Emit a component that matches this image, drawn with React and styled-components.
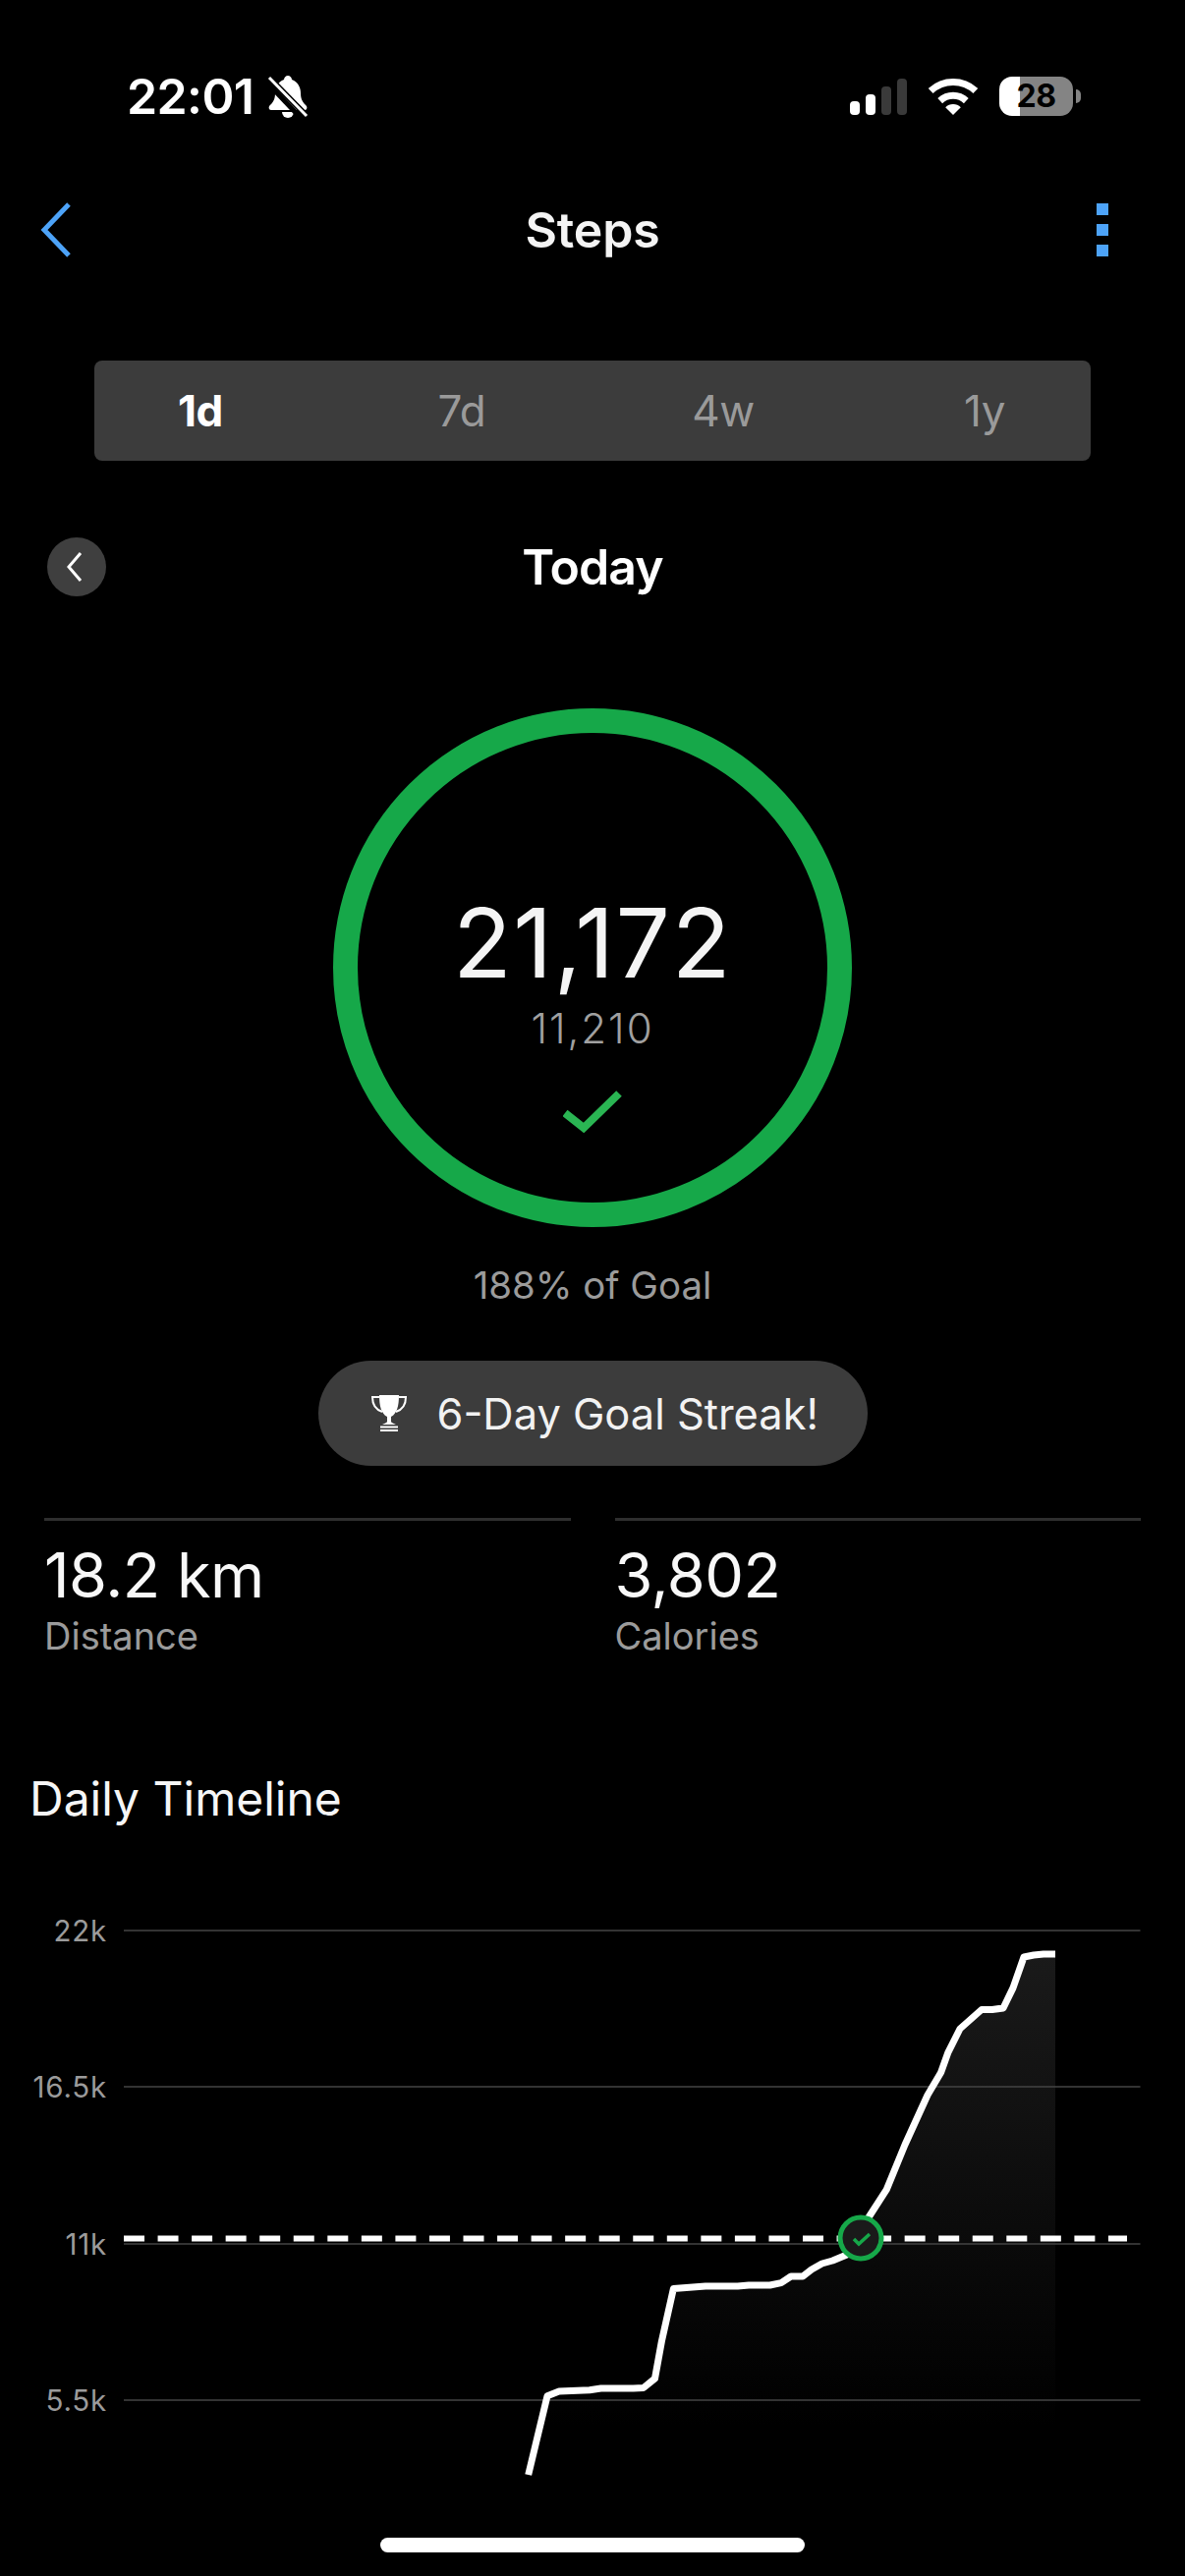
import React from "react";
import styled, { createGlobalStyle } from "styled-components";

const Global = createGlobalStyle`
  html, body { margin: 0; padding: 0; background: #000; }
  * { box-sizing: border-box; }
`;

const Page = styled.div`
  width: 1206px;
  height: 2622px;
  background: #000;
  overflow: hidden;
  display: flex;
  flex-direction: column;
  font-family: Inter, "Liberation Sans", sans-serif;
  color: #fff;
`;

const StatusBar = styled.div`
  margin-top: 64px;
  height: 68px;
  padding: 0 106px 0 129px;
  display: flex;
  align-items: center;
  justify-content: space-between;
`;
const StatusLeft = styled.div`
  display: flex;
  align-items: center;
  gap: 14px;
`;
const Clock = styled.span`
  font-size: 50px;
  line-height: 68px;
  font-weight: 600;
  letter-spacing: -0.6px;
`;
const StatusRight = styled.div`
  display: flex;
  align-items: center;
  gap: 22px;
`;
const Signal = styled.div`
  display: flex;
  align-items: flex-end;
  gap: 6px;
  height: 37px;
`;
const SignalBar = styled.i`
  display: block;
  width: 10px;
  height: ${(p) => p.$h}px;
  border-radius: 4px;
  background: ${(p) => (p.$on ? "#fff" : "#3a3a3a")};
`;
const Battery = styled.div`
  display: flex;
  align-items: center;
  gap: 3px;
`;
const BatteryBody = styled.div`
  width: 75px;
  height: 40px;
  border-radius: 13px;
  background: linear-gradient(to right, #fff 0 21px, #848484 21px);
  color: #000;
  font-size: 32px;
  font-weight: 700;
  line-height: 40px;
  text-align: center;
  letter-spacing: -0.5px;
`;
const BatteryCap = styled.i`
  display: block;
  width: 5px;
  height: 14px;
  border-radius: 0 5px 5px 0;
  background: #848484;
`;

const NavBar = styled.header`
  margin-top: 72px;
  height: 60px;
  padding: 0 40px;
  display: grid;
  grid-template-columns: 1fr auto 1fr;
  align-items: center;
`;
const NavTitle = styled.h1`
  margin: 0;
  font-size: 50px;
  line-height: 60px;
  font-weight: 600;
  letter-spacing: -0.2px;
  color: #f4f4f4;
`;
const Dots = styled.div`
  justify-self: end;
  margin-right: 38px;
  display: flex;
  flex-direction: column;
  gap: 9px;
`;
const Dot = styled.i`
  display: block;
  width: 12px;
  height: 12px;
  background: #4da3f8;
`;

const Segment = styled.div`
  margin: 103px 96px 0;
  height: 102px;
  padding: 0 8px;
  border-radius: 8px;
  background: #3c3c3c;
  display: grid;
  grid-template-columns: repeat(4, 200px);
  column-gap: 66px;
  align-items: center;
`;
const SegmentItem = styled.div`
  text-align: center;
  font-size: 44px;
  line-height: 56px;
  letter-spacing: -0.4px;
  font-weight: ${(p) => (p.$active ? 700 : 400)};
  color: ${(p) => (p.$active ? "#fff" : "#9a9a9a")};
`;

const DateRow = styled.div`
  margin-top: 78px;
  height: 60px;
  padding: 0 48px;
  display: grid;
  grid-template-columns: 1fr auto 1fr;
  align-items: center;
`;
const RoundButton = styled.div`
  width: 60px;
  height: 60px;
  border-radius: 50%;
  background: #3f3f3f;
  display: flex;
  align-items: center;
  justify-content: center;
`;
const BackGlyph = styled.svg`
  display: block;
  margin-left: -4px;
`;
const DateTitle = styled.h2`
  margin: 0;
  font-size: 50px;
  line-height: 60px;
  font-weight: 600;
  letter-spacing: -0.9px;
`;

const Ring = styled.div`
  margin: 114px auto 0;
  width: 528px;
  height: 528px;
  border-radius: 50%;
  border: 25px solid #16a849;
  display: flex;
  flex-direction: column;
  align-items: center;
  padding-top: 155px;
`;
const RingValue = styled.div`
  font-size: 98px;
  line-height: 118px;
  font-weight: 400;
  color: #f4f4f4;
  letter-spacing: 1.6px;
`;
const RingGoal = styled.div`
  font-size: 42px;
  line-height: 50px;
  font-weight: 300;
  color: #a0a0a0;
  letter-spacing: 2px;
  margin-top: 3px;
`;
const RingCheck = styled.svg`
  margin-top: 37px;
  display: block;
`;

const GoalText = styled.div`
  margin-top: 34px;
  text-align: center;
  font-size: 38.4px;
  line-height: 50px;
  color: #9b9b9b;
`;

const Pill = styled.div`
  margin: 52px auto 0;
  width: 559px;
  height: 107px;
  border-radius: 54px;
  background: #3c3c3c;
  display: flex;
  align-items: center;
  padding-left: 54px;
  gap: 31px;
`;
const PillText = styled.span`
  font-size: 43.4px;
  line-height: 56px;
  color: #f2f2f2;
`;

const Stats = styled.section`
  margin-top: 53px;
  padding: 0 45px;
  display: grid;
  grid-template-columns: 1fr 1fr;
  column-gap: 45px;
`;
const Stat = styled.div`
  border-top: 3px solid #2e2e2e;
  padding-top: 20px;
`;
const StatValue = styled.div`
  font-size: 63px;
  line-height: 70px;
  color: #f8f8f8;
  letter-spacing: -0.5px;
`;
const StatLabel = styled.div`
  margin-top: 5px;
  font-size: 38px;
  line-height: 44px;
  color: #9b9b9b;
`;

const SectionTitle = styled.h3`
  margin: 114px 0 0;
  padding-left: 30px;
  font-size: 48px;
  line-height: 60px;
  font-weight: 400;
  color: #f6f6f6;
`;

const Chart = styled.svg`
  display: block;
  flex: none;
`;
const AxisLabel = styled.text`
  font-family: Inter, "Liberation Sans", sans-serif;
  font-size: 29.5px;
  letter-spacing: 0.8px;
  fill: #9b9b9b;
`;

const HomeBar = styled.div`
  margin: 42px auto 0;
  width: 432px;
  height: 15px;
  border-radius: 8px;
  background: #fff;
`;

const Bell = () => (
  <svg width="42" height="44" viewBox="0 0 42 44">
    <path
      fill="#fff"
      d="M21 1C23 1 25 3 25 5C31 7 34 13 34 19C34 25 36 28 40 32C41 34 40 36 38 36L4 36C2 36 1 34 2 32C6 28 8 25 8 19C8 13 11 7 17 5C17 3 19 1 21 1Z"
    />
    <path fill="#fff" d="M15 38H27A6 6 0 0 1 15 38Z" />
    <line x1="-1" y1="7" x2="34" y2="44" stroke="#000" strokeWidth="5" />
    <line x1="2" y1="3" x2="40" y2="42" stroke="#000" strokeWidth="6" />
    <line x1="2" y1="3" x2="40" y2="42" stroke="#fff" strokeWidth="3" />
  </svg>
);

const Wifi = () => (
  <svg width="50" height="37" viewBox="0 0 50 37">
    <path d="M2.2 12.5A33.5 33.5 0 0 1 47.8 12.5" fill="none" stroke="#fff" strokeWidth="7" />
    <path d="M11.7 22.6A19.5 19.5 0 0 1 38.3 22.6" fill="none" stroke="#fff" strokeWidth="7" />
    <path d="M25 37L17.2 29.2A11 11 0 0 1 32.8 29.2Z" fill="#fff" />
  </svg>
);

const Trophy = () => (
  <svg width="36" height="37" viewBox="0 0 36 37">
    <path fill="#fff" d="M8 0H28C28 11 26 19 20 22V27C20 28 23 29 25 30H11C13 29 16 28 16 27V22C10 19 8 11 8 0Z" />
    <path d="M8 2H1C1 10 5 15 11 17M28 2H35C35 10 31 15 25 17" fill="none" stroke="#fff" strokeWidth="2" />
    <rect x="9" y="31.5" width="18" height="2" fill="#fff" />
    <rect x="9" y="35" width="18" height="2" fill="#fff" />
  </svg>
);

const linePoints = [
  [537.7, 2519], [557, 2438.7], [569, 2434], [600, 2432.7], [611.6, 2431], [644.5, 2431],
  [655, 2430.4], [666.5, 2421], [673.4, 2383], [685.4, 2329.6], [718, 2327], [750.8, 2327],
  [762, 2326], [783.6, 2326], [795, 2323.6], [805, 2317], [817, 2317], [826, 2310],
  [836.6, 2304], [847.4, 2301], [863, 2294.6], [884, 2257], [902.3, 2228.7], [921, 2183],
  [944, 2132.5], [957.6, 2109.5], [965, 2088.8], [977, 2065], [999, 2045.5], [1009.7, 2045.5],
  [1021, 2044], [1031, 2023.4], [1042, 1992], [1052, 1990], [1062, 1989], [1074, 1989],
];
const linePath = linePoints.map((p) => p.join(",")).join(" ");
const fillPath = `${linePath} 1074,2519 537.7,2519`;

const gridLines = [
  { y: 1965, label: "22k" },
  { y: 2124, label: "16.5k" },
  { y: 2284, label: "11k" },
  { y: 2443, label: "5.5k" },
];

const TimelineChart = () => (
  <Chart width="1206" height="680" viewBox="0 1861 1206 680">
    <defs>
      <linearGradient id="area" x1="0" y1="1989" x2="0" y2="2470" gradientUnits="userSpaceOnUse">
        <stop offset="0" stopColor="#1a1a1a" />
        <stop offset="1" stopColor="#000" />
      </linearGradient>
    </defs>
    <polygon points={fillPath} fill="url(#area)" />
    {gridLines.map((g) => (
      <g key={g.label}>
        <line x1="126" x2="1160.5" y1={g.y} y2={g.y} stroke="#444" strokeWidth="1.5" />
        <AxisLabel x="109" y={g.y + 11} textAnchor="end">{g.label}</AxisLabel>
      </g>
    ))}
    <line x1="126" x2="1147" y1="2278.5" y2="2278.5" stroke="#fff" strokeWidth="6" strokeDasharray="21 13.55" />
    <polyline points={linePath} fill="none" stroke="#fff" strokeWidth="7" strokeLinejoin="round" />
    <circle cx="876" cy="2278" r="21" fill="#1a1a1a" stroke="#16a849" strokeWidth="5" />
    <polyline points="869,2279 874,2284 885,2274" fill="none" stroke="#16a849" strokeWidth="3.5" />
  </Chart>
);

export default function App() {
  return (
    <Page>
      <Global />
      <StatusBar>
        <StatusLeft>
          <Clock>22:01</Clock>
          <Bell />
        </StatusLeft>
        <StatusRight>
          <Signal>
            <SignalBar $on $h={14} />
            <SignalBar $on $h={21} />
            <SignalBar $h={29} />
            <SignalBar $h={37} />
          </Signal>
          <Wifi />
          <Battery>
            <BatteryBody>28</BatteryBody>
            <BatteryCap />
          </Battery>
        </StatusRight>
      </StatusBar>

      <NavBar>
        <svg width="34" height="56" viewBox="0 0 34 56">
          <polyline points="30,2 5,28 30,54" fill="none" stroke="#4da3f8" strokeWidth="5" />
        </svg>
        <NavTitle>Steps</NavTitle>
        <Dots>
          <Dot />
          <Dot />
          <Dot />
        </Dots>
      </NavBar>

      <Segment>
        <SegmentItem $active>1d</SegmentItem>
        <SegmentItem>7d</SegmentItem>
        <SegmentItem>4w</SegmentItem>
        <SegmentItem>1y</SegmentItem>
      </Segment>

      <DateRow>
        <RoundButton>
          <BackGlyph width="20" height="32" viewBox="0 0 20 32">
            <polyline points="16,2 4,16 16,30" fill="none" stroke="#fff" strokeWidth="3" />
          </BackGlyph>
        </RoundButton>
        <DateTitle>Today</DateTitle>
        <span />
      </DateRow>

      <Ring>
        <RingValue>21,172</RingValue>
        <RingGoal>11,210</RingGoal>
        <RingCheck width="60" height="44" viewBox="0 0 60 44">
          <polyline points="2,24 21,39 57,4" fill="none" stroke="#2ab553" strokeWidth="8" />
        </RingCheck>
      </Ring>

      <GoalText>188% of Goal</GoalText>

      <Pill>
        <Trophy />
        <PillText>6-Day Goal Streak!</PillText>
      </Pill>

      <Stats>
        <Stat>
          <StatValue>18.2 km</StatValue>
          <StatLabel>Distance</StatLabel>
        </Stat>
        <Stat>
          <StatValue>3,802</StatValue>
          <StatLabel>Calories</StatLabel>
        </Stat>
      </Stats>

      <SectionTitle>Daily Timeline</SectionTitle>
      <TimelineChart />
      <HomeBar />
    </Page>
  );
}
